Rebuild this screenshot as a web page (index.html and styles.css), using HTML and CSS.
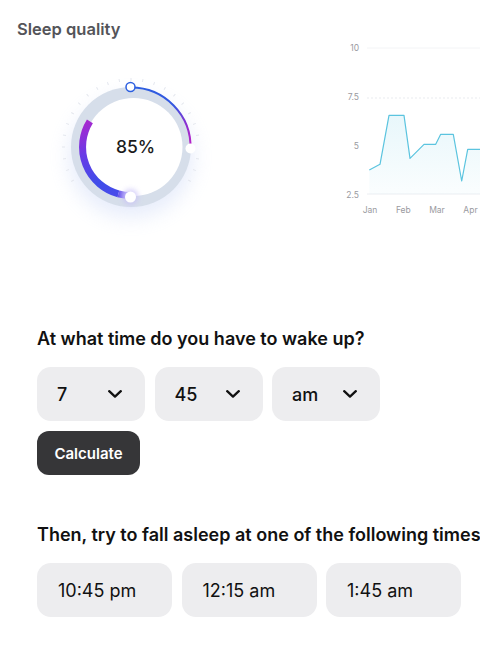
FILE: index.html
```html
<!DOCTYPE html>
<html lang="en">
<head>
<meta charset="utf-8">
<title>Sleep calculator</title>
<link rel="stylesheet" href="styles.css">
</head>
<body>
<div class="page">
  <section class="top">
    <div class="quality">
      <h2 class="quality-title">Sleep quality</h2>
      <svg class="gauge" width="180" height="180" viewBox="0 0 180 180">
        <defs>
          <filter id="blur" x="-50%" y="-50%" width="200%" height="200%">
            <feGaussianBlur stdDeviation="10"/>
          </filter>
          <filter id="soft" x="-100%" y="-100%" width="300%" height="300%">
            <feGaussianBlur stdDeviation="2.5"/>
          </filter>
          <linearGradient id="thick" gradientUnits="userSpaceOnUse" x1="48" y1="64" x2="80" y2="138">
            <stop offset="0" stop-color="#a628cf"/>
            <stop offset="0.35" stop-color="#6a3ae6"/>
            <stop offset="0.75" stop-color="#3f4de9"/>
            <stop offset="1" stop-color="#4a4aea"/>
          </linearGradient>
          <linearGradient id="fade" gradientUnits="userSpaceOnUse" x1="76" y1="0" x2="90" y2="0">
            <stop offset="0" stop-color="#5a46ea"/>
            <stop offset="1" stop-color="#cfc4fa"/>
          </linearGradient>
          <linearGradient id="thin" gradientUnits="userSpaceOnUse" x1="90" y1="30" x2="150" y2="92">
            <stop offset="0" stop-color="#2c5fe0"/>
            <stop offset="0.5" stop-color="#3457e0"/>
            <stop offset="0.75" stop-color="#8a2fd2"/>
            <stop offset="1" stop-color="#c21fc4"/>
          </linearGradient>
        </defs>
        <ellipse cx="90" cy="100" rx="62" ry="60" fill="#c2d0f5" opacity="0.4" filter="url(#blur)"/>
        <g class="ticks" stroke="#e4e7ee" stroke-width="1">
          <line x1="90" y1="21" x2="90" y2="24" transform="rotate(0 90 90)"/>
          <line x1="90" y1="21" x2="90" y2="24" transform="rotate(10 90 90)"/>
          <line x1="90" y1="21" x2="90" y2="24" transform="rotate(20 90 90)"/>
          <line x1="90" y1="21" x2="90" y2="24" transform="rotate(30 90 90)"/>
          <line x1="90" y1="21" x2="90" y2="24" transform="rotate(40 90 90)"/>
          <line x1="90" y1="21" x2="90" y2="24" transform="rotate(50 90 90)"/>
          <line x1="90" y1="21" x2="90" y2="24" transform="rotate(60 90 90)"/>
          <line x1="90" y1="21" x2="90" y2="24" transform="rotate(70 90 90)"/>
          <line x1="90" y1="21" x2="90" y2="24" transform="rotate(80 90 90)"/>
          <line x1="90" y1="21" x2="90" y2="24" transform="rotate(100 90 90)"/>
          <line x1="90" y1="21" x2="90" y2="24" transform="rotate(110 90 90)"/>
          <line x1="90" y1="21" x2="90" y2="24" transform="rotate(120 90 90)"/>
          <line x1="90" y1="21" x2="90" y2="24" transform="rotate(240 90 90)"/>
          <line x1="90" y1="21" x2="90" y2="24" transform="rotate(250 90 90)"/>
          <line x1="90" y1="21" x2="90" y2="24" transform="rotate(260 90 90)"/>
          <line x1="90" y1="21" x2="90" y2="24" transform="rotate(270 90 90)"/>
          <line x1="90" y1="21" x2="90" y2="24" transform="rotate(280 90 90)"/>
          <line x1="90" y1="21" x2="90" y2="24" transform="rotate(290 90 90)"/>
          <line x1="90" y1="21" x2="90" y2="24" transform="rotate(300 90 90)"/>
          <line x1="90" y1="21" x2="90" y2="24" transform="rotate(310 90 90)"/>
          <line x1="90" y1="21" x2="90" y2="24" transform="rotate(320 90 90)"/>
          <line x1="90" y1="21" x2="90" y2="24" transform="rotate(330 90 90)"/>
          <line x1="90" y1="21" x2="90" y2="24" transform="rotate(340 90 90)"/>
          <line x1="90" y1="21" x2="90" y2="24" transform="rotate(350 90 90)"/>
        </g>
        <circle cx="90" cy="90" r="60" fill="#d6deea"/>
        <circle cx="92.5" cy="90" r="49" fill="#ffffff"/>
        <path d="M 48.9 64.3 A 48.5 48.5 0 0 0 77.4 136.8" fill="none" stroke="url(#thick)" stroke-width="7"/>
        <path d="M 77.4 136.8 A 48.5 48.5 0 0 0 90 138.5" fill="none" stroke="url(#fade)" stroke-width="7"/>
        <path d="M 89.5 30.5 A 59.5 59.5 0 0 1 149.5 92" fill="none" stroke="url(#thin)" stroke-width="2"/>
        <circle cx="89.5" cy="140" r="8" fill="#c9c1f7" opacity="0.7" filter="url(#soft)"/>
        <circle cx="89.5" cy="140" r="5.5" fill="#ffffff"/>
        <circle cx="149.5" cy="91.5" r="5" fill="#ffffff"/>
        <circle cx="89.5" cy="30" r="4.5" fill="#ffffff" stroke="#2c5fe0" stroke-width="1.5"/>
        <text class="gauge-value" x="94.5" y="95.6" text-anchor="middle">85%</text>
      </svg>
    </div>
    <div class="chart-wrap">
      <svg class="chart" width="140" height="180" viewBox="0 0 140 180">
        <defs>
          <linearGradient id="area" x1="0" y1="0" x2="0" y2="1">
            <stop offset="0" stop-color="#5cc6e2" stop-opacity="0.14"/>
            <stop offset="1" stop-color="#5cc6e2" stop-opacity="0.03"/>
          </linearGradient>
        </defs>
        <line x1="27" y1="8" x2="140" y2="8" stroke="#f3f4f6" stroke-width="1"/>
        <line x1="27" y1="58" x2="140" y2="58" stroke="#e9ebef" stroke-width="1" stroke-dasharray="2 2"/>
        <line x1="27" y1="154" x2="140" y2="154" stroke="#eceef2" stroke-width="1"/>
        <g class="axis">
          <text x="19" y="11.4" text-anchor="end">10</text>
          <text x="19" y="60.2" text-anchor="end">7.5</text>
          <text x="19" y="109.2" text-anchor="end">5</text>
          <text x="19" y="157.5" text-anchor="end">2.5</text>
          <text x="30" y="172.6" text-anchor="middle">Jan</text>
          <text x="63.3" y="172.6" text-anchor="middle">Feb</text>
          <text x="97" y="172.6" text-anchor="middle">Mar</text>
          <text x="130.5" y="172.6" text-anchor="middle">Apr</text>
        </g>
        <polygon points="29.3,130 40,124.3 49,75.3 64,75.3 70,118.3 84,104.3 95.7,104.3 100.7,94.3 113.3,94.3 121.7,141 127.7,109.3 145,109.3 145,154 29.3,154" fill="url(#area)"/>
        <polyline points="29.3,130 40,124.3 49,75.3 64,75.3 70,118.3 84,104.3 95.7,104.3 100.7,94.3 113.3,94.3 121.7,141 127.7,109.3 145,109.3" fill="none" stroke="#5bc4df" stroke-width="1.2" stroke-linejoin="round"/>
      </svg>
    </div>
  </section>

  <section class="wake">
    <h3 class="question">At what time do you have to wake up?</h3>
    <div class="selects">
      <div class="select"><span>7</span><svg class="chev" width="14" height="8" viewBox="0 0 14 8"><path d="M1.2 1.2 L7 6.6 L12.8 1.2" fill="none" stroke="#111" stroke-width="2.3" stroke-linecap="round" stroke-linejoin="round"/></svg></div>
      <div class="select"><span>45</span><svg class="chev" width="14" height="8" viewBox="0 0 14 8"><path d="M1.2 1.2 L7 6.6 L12.8 1.2" fill="none" stroke="#111" stroke-width="2.3" stroke-linecap="round" stroke-linejoin="round"/></svg></div>
      <div class="select"><span>am</span><svg class="chev" width="14" height="8" viewBox="0 0 14 8"><path d="M1.2 1.2 L7 6.6 L12.8 1.2" fill="none" stroke="#111" stroke-width="2.3" stroke-linecap="round" stroke-linejoin="round"/></svg></div>
    </div>
    <button class="calc" type="button">Calculate</button>
  </section>

  <section class="results">
    <h3 class="question">Then, try to fall asleep at one of the following times</h3>
    <div class="times">
      <div class="time">10:45 pm</div>
      <div class="time">12:15 am</div>
      <div class="time">1:45 am</div>
    </div>
  </section>
</div>
</body>
</html>
```

FILE: styles.css
```css
html, body {
  margin: 0;
  padding: 0;
  background: #ffffff;
  overflow: hidden;
}

body {
  font-family: Inter, "Noto Sans", "Liberation Sans", sans-serif;
  color: #111111;
  width: 480px;
  height: 653px;
}

.page {
  width: 480px;
  overflow: hidden;
}

.top {
  display: flex;
  height: 310px;
  padding-left: 17px;
}

.quality {
  width: 323px;
  flex: none;
}

.quality-title {
  margin: 0;
  padding-top: 19px;
  font-size: 16.5px;
  line-height: 20px;
  font-weight: 600;
  color: #545459;
}

.gauge {
  display: block;
  margin-top: 18px;
  margin-left: 24px;
}

.gauge-value {
  font-family: Inter, "Noto Sans", sans-serif;
  font-size: 17.5px;
  font-weight: 500;
  fill: #1a1a1a;
}

.chart-wrap {
  margin-top: 40px;
  width: 140px;
  overflow: hidden;
  flex: none;
}

.chart {
  display: block;
}

.axis text {
  font-family: Inter, "Noto Sans", sans-serif;
  font-size: 8.5px;
  fill: #9a9aa0;
}

.wake, .results {
  padding-left: 37px;
}

.question {
  margin: 0;
  font-size: 18px;
  line-height: 22px;
  font-weight: 600;
  color: #111111;
  white-space: nowrap;
}

.wake .question {
  padding-top: 18px;
}

.selects {
  display: flex;
  gap: 9.5px;
  margin-top: 17px;
}

.select {
  width: 108px;
  height: 54px;
  box-sizing: border-box;
  border-radius: 14px;
  background: #ededef;
  display: flex;
  align-items: center;
  justify-content: space-between;
  padding: 0 23px 0 20px;
  font-size: 18px;
  font-weight: 500;
}

.chev {
  display: block;
}

.calc {
  display: block;
  margin-top: 10px;
  width: 103px;
  height: 44px;
  border: 0;
  border-radius: 12px;
  background: #363638;
  color: #ffffff;
  font-family: Inter, "Noto Sans", sans-serif;
  font-size: 15px;
  font-weight: 600;
  padding: 0;
}

.results {
  margin-top: 49px;
}

.times {
  display: flex;
  gap: 9.5px;
  margin-top: 17px;
}

.time {
  width: 135px;
  height: 54px;
  box-sizing: border-box;
  border-radius: 14px;
  background: #ededef;
  display: flex;
  align-items: center;
  padding-left: 21px;
  font-size: 18px;
  font-weight: 400;
}
```
